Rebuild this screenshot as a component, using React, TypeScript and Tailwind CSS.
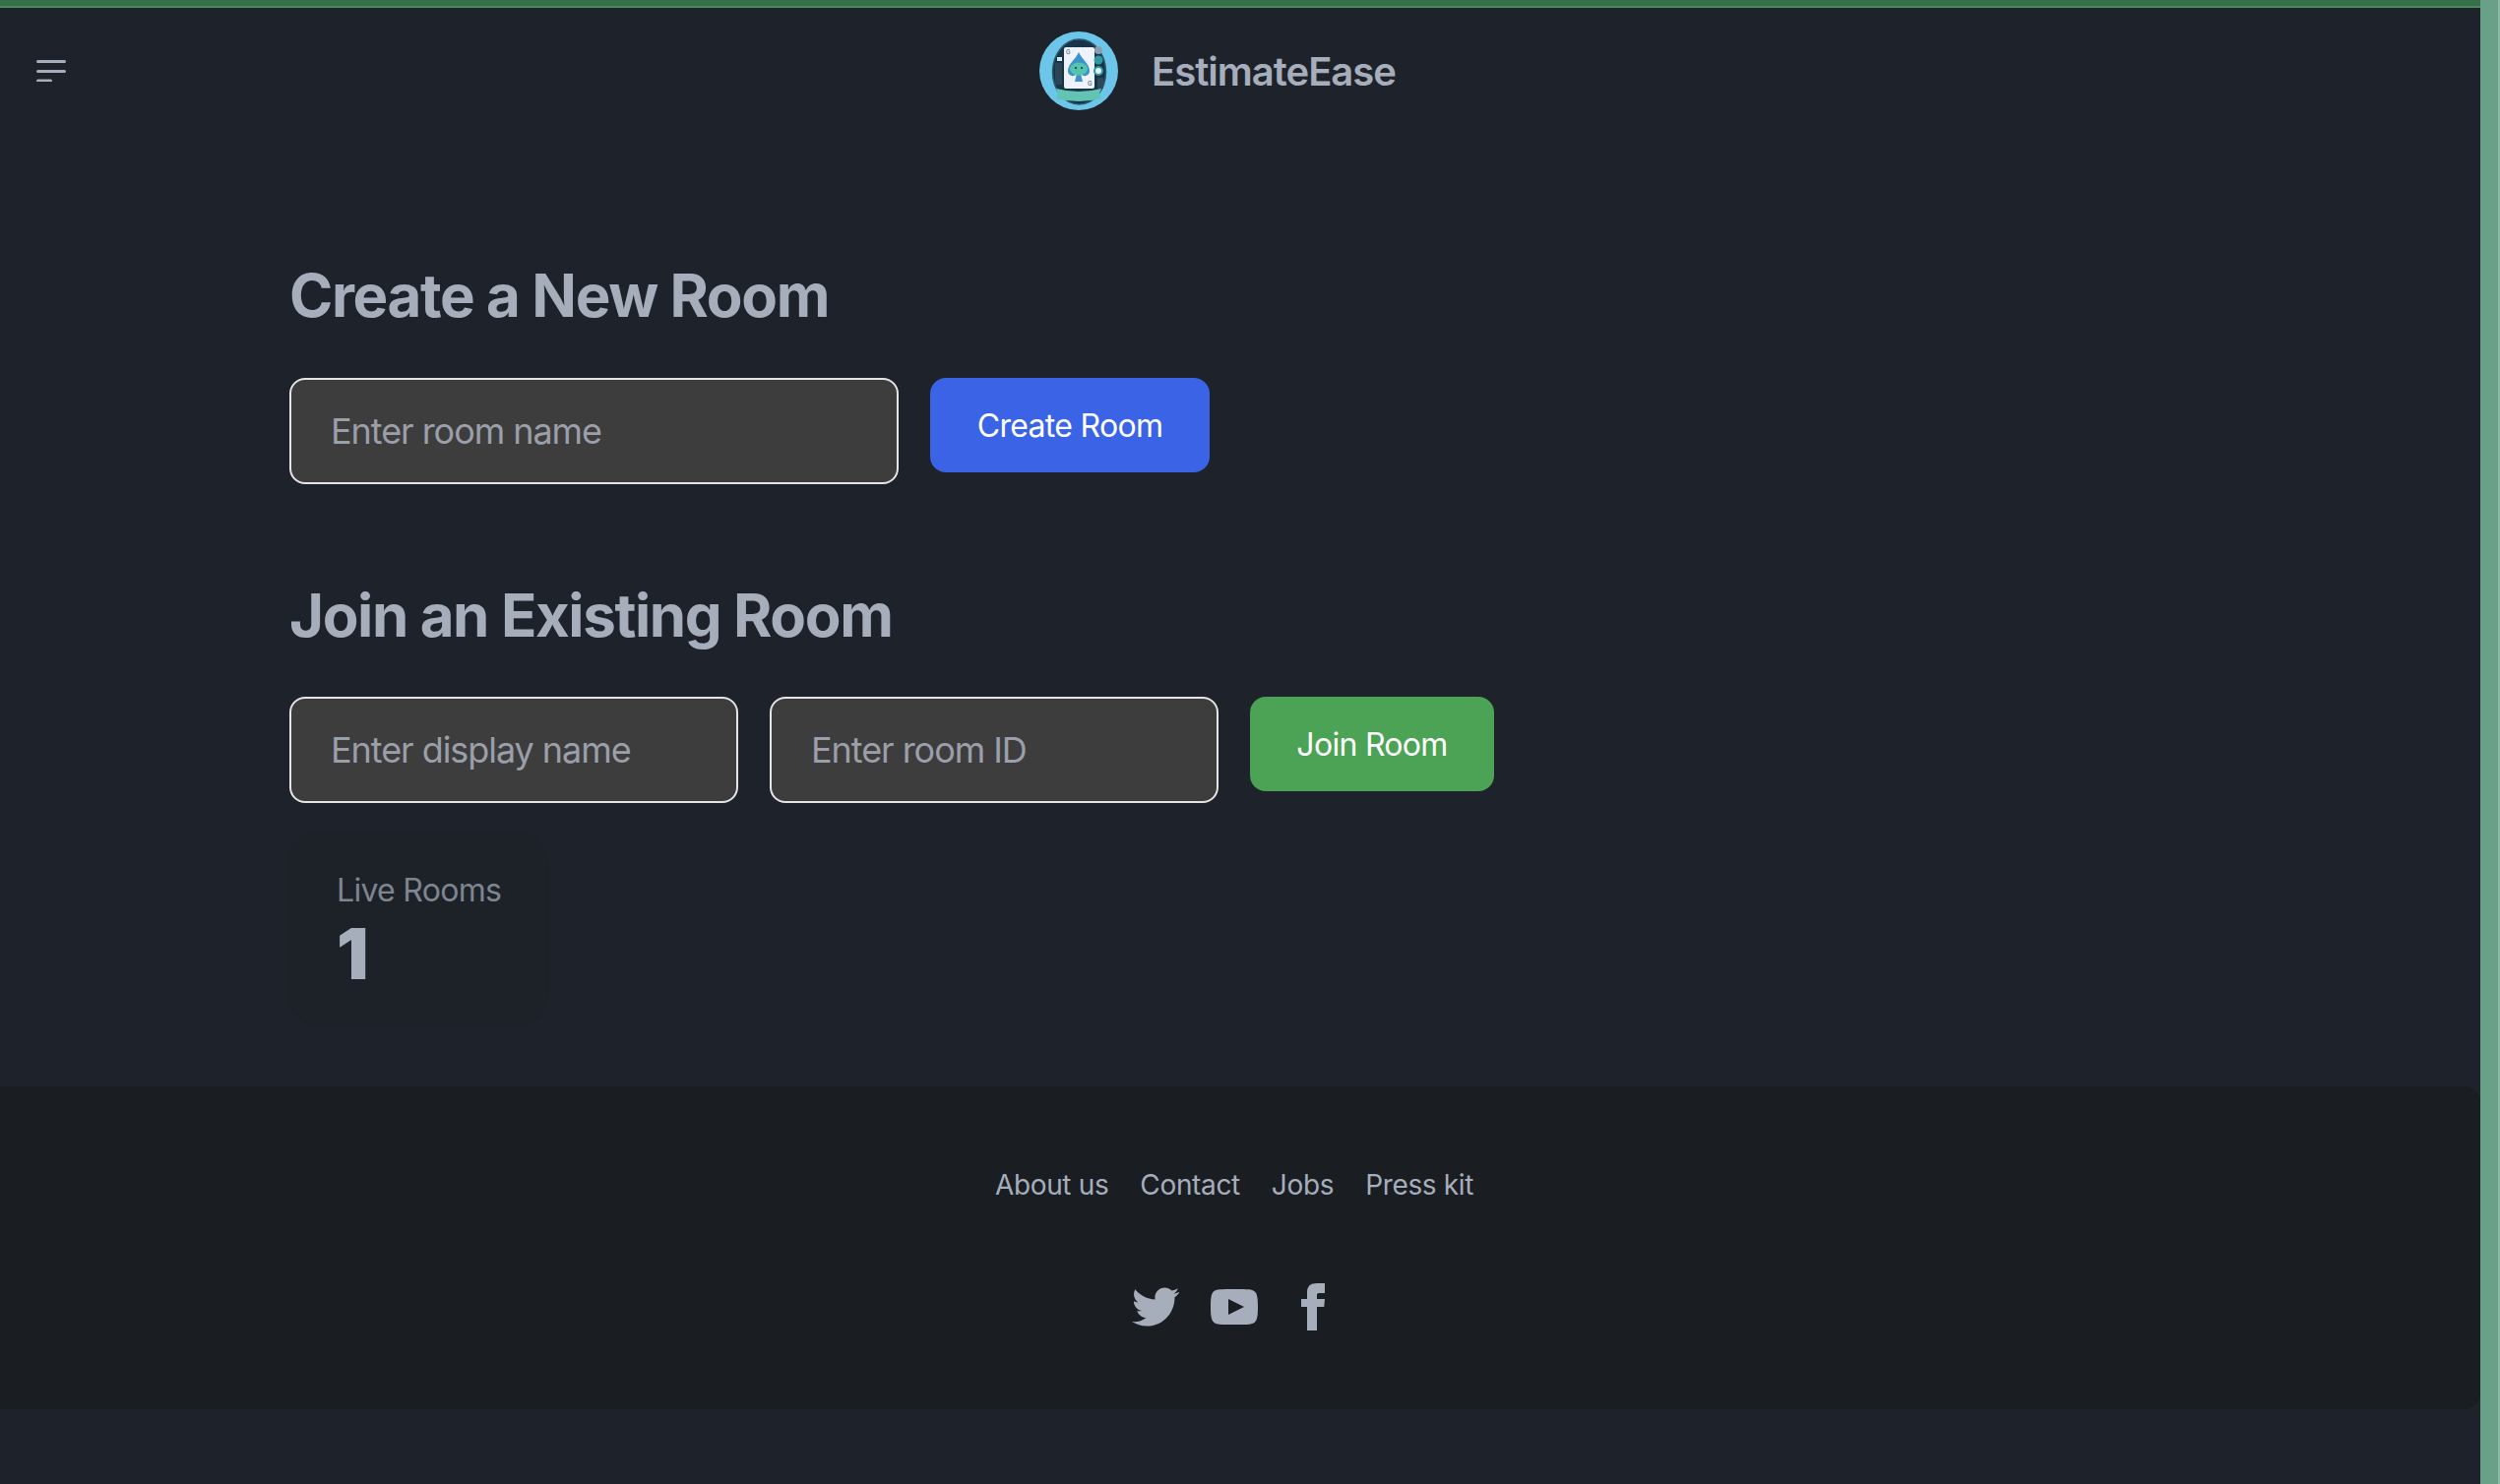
export default function App() {
  return (
    <div className="flex h-[1508px] w-[2540px] overflow-hidden bg-[#1e232b] font-['Inter',sans-serif] text-[#a6adbb]">
      <div className="flex min-w-0 flex-1 flex-col">
        <div className="h-2 border-b-2 border-[#4c8a5c] bg-[#35704a]" />
        <header className="flex h-32 items-center">
          <div className="w-[1056px] pl-[37px]">
            <svg width="30" height="22" viewBox="0 0 30 22" fill="none" stroke="#a6adbb" strokeWidth="3" strokeLinecap="round">
              <path d="M1.5 1.5h27M1.5 11.5h27M1.5 21h13" />
            </svg>
          </div>
          <svg width="80" height="80" viewBox="0 0 80 80" className="shrink-0">
            <circle cx="40" cy="40" r="40" fill="#6cc6ea" />
            <ellipse cx="40.5" cy="41" rx="27" ry="33" fill="#17344a" stroke="#2d566c" strokeWidth="1.5" />
            <rect x="25" y="16" width="31" height="42" rx="2" fill="#eef3fb" />
            <path d="M40 21c3 7 11 12 11 19 0 5-6 7-9 3l2 8h-8l2-8c-3 4-9 2-9-3 0-7 8-12 11-19z" fill="#3d93c9" />
            <ellipse cx="40" cy="38" rx="9" ry="6.5" fill="#54c4ae" />
            <circle cx="37" cy="37" r="1" fill="#17344a" />
            <circle cx="43" cy="37" r="1" fill="#17344a" />
            <text x="27" y="23" fontSize="6" fill="#2d4a57">G</text>
            <text x="49" y="55" fontSize="6" fill="#2d4a57">G</text>
            <circle cx="60" cy="19" r="4" fill="#8aa0b2" />
            <circle cx="60" cy="29" r="4.5" fill="#2f9aa0" />
            <circle cx="60" cy="40" r="4" fill="#e2f2f2" stroke="#2f9aa0" strokeWidth="2" />
            <rect x="16" y="32" width="7" height="22" fill="#2a4656" />
            <rect x="18" y="26" width="5" height="4" fill="#cfe8ee" />
            <rect x="59" y="47" width="6" height="11" fill="#2d4a57" />
            <path d="M17 58q23 6 46 0l-2 5 2 5q-23 6-46 0l2-5z" fill="#63c4b4" />
          </svg>
          <span className="ml-[34px] pt-0.5 text-[40px] font-semibold leading-none tracking-[-1px]">EstimateEase</span>
        </header>

        <main className="flex flex-1 flex-col pl-[294px] pt-32">
          <h1 className="mb-12 text-[60px] font-[750] leading-[72px] tracking-[-1.4px]">Create a New Room</h1>
          <div className="flex items-start gap-8">
            <input placeholder="Enter room name" className="h-[108px] w-[619px] rounded-2xl border-2 border-[#e5e5e5] bg-[#3d3d3d] px-10 text-[36px] tracking-[-1.05px] placeholder:text-[#9a9fa9] outline-none" />
            <button className="h-24 w-[284px] rounded-2xl bg-[#3a63e6] pt-0.5 text-[32px] font-normal tracking-[-0.7px] text-white">Create Room</button>
          </div>

          <h2 className="mb-[47px] mt-[97px] text-[60px] font-[750] leading-[72px] tracking-[-1.4px]">Join an Existing Room</h2>
          <div className="flex items-start gap-8">
            <input placeholder="Enter display name" className="h-[108px] w-[456px] rounded-2xl border-2 border-[#e5e5e5] bg-[#3d3d3d] px-10 text-[36px] tracking-[-1.05px] placeholder:text-[#9a9fa9] outline-none" />
            <input placeholder="Enter room ID" className="h-[108px] w-[456px] rounded-2xl border-2 border-[#e5e5e5] bg-[#3d3d3d] px-10 text-[36px] tracking-[-1.05px] placeholder:text-[#9a9fa9] outline-none" />
            <button className="h-24 w-[248px] rounded-2xl bg-[#4ca355] pt-0.5 text-[32px] font-normal tracking-[-0.7px] text-white">Join Room</button>
          </div>

          <div className="mt-[29px] flex h-[196px] w-[262px] flex-col rounded-[32px] bg-[#1d2228] px-12 pt-10 shadow-[0_1px_3px_rgba(0,0,0,0.1)]">
            <div className="whitespace-nowrap text-[32px] leading-10 tracking-[-0.7px] text-[#7f8590]">Live Rooms</div>
            <div className="mt-1 text-[72px] font-black leading-[80px]">1</div>
          </div>
        </main>

        <footer className="mb-[76px] flex flex-col items-center gap-20 rounded-r-2xl bg-[#1a1e23] py-20 pr-3">
          <nav className="flex gap-8 text-[28px] leading-10 tracking-[-0.35px]">
            <span>About us</span>
            <span>Contact</span>
            <span>Jobs</span>
            <span>Press kit</span>
          </nav>
          <div className="flex gap-8">
            <svg width="48" height="48" viewBox="0 0 24 24" fill="#a6adbb">
              <path d="M24 4.557c-.883.392-1.832.656-2.828.775 1.017-.609 1.798-1.574 2.165-2.724-.951.564-2.005.974-3.127 1.195-.897-.957-2.178-1.555-3.594-1.555-3.179 0-5.515 2.966-4.797 6.045-4.091-.205-7.719-2.165-10.148-5.144-1.29 2.213-.669 5.108 1.523 6.574-.806-.026-1.566-.247-2.229-.616-.054 2.281 1.581 4.415 3.949 4.89-.693.188-1.452.232-2.224.084.626 1.956 2.444 3.379 4.6 3.419-2.07 1.623-4.678 2.348-7.29 2.04 2.179 1.397 4.768 2.212 7.548 2.212 9.142 0 14.307-7.721 14.184-14.646.962-.695 1.797-1.562 2.457-2.549z" />
            </svg>
            <svg width="48" height="48" viewBox="0 0 24 24" fill="#a6adbb">
              <path d="M19.615 3.184c-3.604-.246-11.631-.245-15.23 0-3.897.266-4.356 2.62-4.385 8.816.029 6.185.484 8.549 4.385 8.816 3.6.245 11.626.246 15.23 0 3.897-.266 4.356-2.62 4.385-8.816-.029-6.185-.484-8.549-4.385-8.816zm-10.615 12.816v-8l8 3.993-8 4.007z" />
            </svg>
            <svg width="48" height="48" viewBox="0 0 24 24" fill="#a6adbb">
              <path d="M9 8h-3v4h3v12h5v-12h3.642l.358-4h-4v-1.667c0-.955.192-1.333 1.115-1.333h2.885v-5h-3.808c-3.596 0-5.192 1.583-5.192 4.615v3.385z" />
            </svg>
          </div>
        </footer>
      </div>
      <aside className="w-5 shrink-0 border-r-2 border-[#8fb9a5] bg-[#6ba088]" />
    </div>
  );
}
